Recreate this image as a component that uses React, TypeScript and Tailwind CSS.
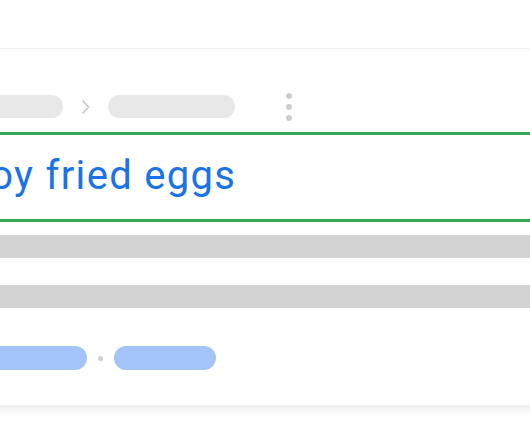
export default function App() {
  return (
    <div className="w-[530px] h-[442px] overflow-hidden bg-white pt-[48px]" style={{ fontFamily: 'Roboto, "Open Sans", sans-serif' }}>
      <div className="ml-[-90px] w-[720px] bg-white border-t border-[#f2f2f2] shadow-[0_5px_8px_rgba(0,0,0,0.07)] pt-[46px] pb-[35px]">
        {/* breadcrumb */}
        <div className="flex items-center h-[23px] pl-[60px]">
          <div className="w-[93px] h-[23px] rounded-full bg-[#e8e8e8]" />
          <svg className="ml-[18px] w-[9px] h-[16px]" viewBox="0 0 9 16" fill="none">
            <path d="M1.5 1.5 L7.5 8 L1.5 14.5" stroke="#c9c9c9" strokeWidth="1.6" />
          </svg>
          <div className="ml-[18px] w-[127px] h-[23px] rounded-full bg-[#e8e8e8]" />
          <div className="ml-[51px] flex flex-col gap-[5px]">
            <span className="block w-[6px] h-[6px] rounded-full bg-[#cdcdcd]" />
            <span className="block w-[6px] h-[6px] rounded-full bg-[#cdcdcd]" />
            <span className="block w-[6px] h-[6px] rounded-full bg-[#cdcdcd]" />
          </div>
        </div>

        {/* title */}
        <div className="mt-[14px] h-[90px] border-y-[3px] border-[#34a853] flex items-center pl-[22px]">
          <span className="text-[40px] leading-none tracking-[1.3px] text-[#1a73e8] whitespace-nowrap pb-[2px]">Enjoy fried eggs</span>
        </div>

        {/* snippet lines */}
        <div className="mt-[13px] h-[23px] bg-[#d3d3d3]" />
        <div className="mt-[27px] h-[23px] bg-[#d3d3d3]" />

        {/* tags */}
        <div className="mt-[38px] flex items-center pl-[60px]">
          <div className="w-[117px] h-[24px] rounded-full bg-[#a3c3f9]" />
          <span className="ml-[11px] block w-[5px] h-[5px] rounded-full bg-[#d0d0d0]" />
          <div className="ml-[11px] w-[102px] h-[24px] rounded-full bg-[#a3c3f9]" />
        </div>
      </div>
    </div>
  );
}
